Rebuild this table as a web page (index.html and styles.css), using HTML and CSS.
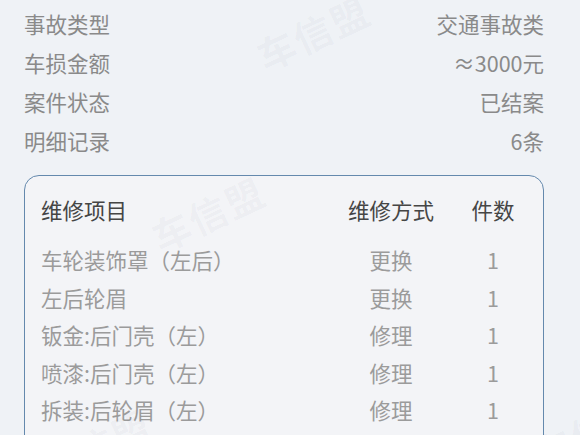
FILE: index.html
```html
<!DOCTYPE html>
<html lang="zh-CN">
<head>
<meta charset="utf-8">
<title>事故详情</title>
<link rel="stylesheet" href="styles.css">
</head>
<body>
<div class="page">
  <div class="info">
    <div class="info-row"><span class="label">事故类型</span><span class="value">交通事故类</span></div>
    <div class="info-row"><span class="label">车损金额</span><span class="value">≈3000元</span></div>
    <div class="info-row"><span class="label">案件状态</span><span class="value">已结案</span></div>
    <div class="info-row"><span class="label">明细记录</span><span class="value">6条</span></div>
  </div>
  <div class="card">
    <div class="grid head">
      <span class="c1">维修项目</span><span class="c2">维修方式</span><span class="c3">件数</span>
    </div>
    <div class="grid item first">
      <span class="c1">车轮装饰罩（左后）</span><span class="c2">更换</span><span class="c3">1</span>
    </div>
    <div class="grid item">
      <span class="c1">左后轮眉</span><span class="c2">更换</span><span class="c3">1</span>
    </div>
    <div class="grid item">
      <span class="c1">钣金:后门壳（左）</span><span class="c2">修理</span><span class="c3">1</span>
    </div>
    <div class="grid item">
      <span class="c1">喷漆:后门壳（左）</span><span class="c2">修理</span><span class="c3">1</span>
    </div>
    <div class="grid item">
      <span class="c1">拆装:后轮眉（左）</span><span class="c2">修理</span><span class="c3">1</span>
    </div>
  </div>
  <span class="wm wm1">车信盟</span>
  <span class="wm wm2">车信盟</span>
  <span class="wm wm3">车信盟</span>
  <span class="wm wm4">车信盟</span>
  <span class="wm wm5">车信盟</span>
</div>
</body>
</html>
```
FILE: styles.css
```css
html, body {
  margin: 0;
  padding: 0;
  background: #eff2f6;
  overflow: hidden;
}
body {
  font-family: "Noto Sans CJK SC", "Noto Sans", sans-serif;
  font-size: 21.5px;
}
.page {
  position: relative;
  padding: 4px 36px 0 24px;
  height: 435px;
  box-sizing: border-box;
  overflow: hidden;
}
.info-row {
  display: flex;
  justify-content: space-between;
  height: 39px;
  line-height: 39px;
  color: #8a8a8a;
}
.card {
  margin-top: 15px;
  border: 1px solid #6489ad;
  border-radius: 15px;
  background: #f3f4f7;
  padding: 15px 20px 40px 16px;
}
.grid {
  display: grid;
  grid-template-columns: 1fr 144px 60px;
  white-space: nowrap;
}
.c2, .c3 {
  text-align: center;
}
.head {
  line-height: 38px;
  color: #454545;
}
.item {
  line-height: 37.5px;
  color: #9b9b9b;
}
.item.first {
  margin-top: 12px;
}
.wm {
  position: absolute;
  font-size: 38px;
  font-weight: 700;
  color: rgba(60, 70, 90, 0.04);
  transform: translate(-50%, -50%) rotate(-25deg);
  white-space: nowrap;
  pointer-events: none;
  letter-spacing: 2px;
}
.wm1 { left: 313px; top: 32px; }
.wm2 { left: 208px; top: 213px; }
.wm3 { left: 95px; top: 445px; }
.wm4 { left: 590px; top: 430px; }
.wm5 { left: -20px; top: -12px; }
```
